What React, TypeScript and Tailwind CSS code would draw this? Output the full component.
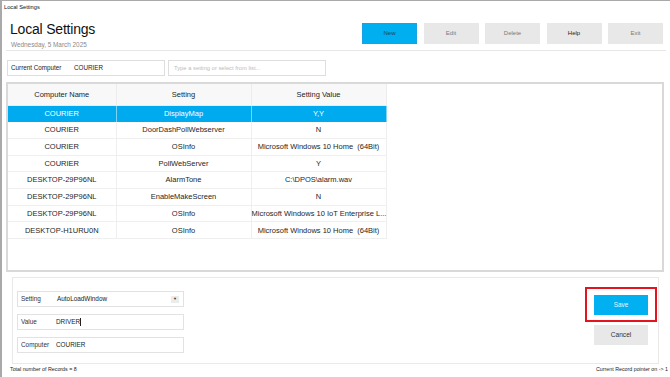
import React from "react";

type Row = { computer: string; setting: string; value: string };

const rows: Row[] = [
  { computer: "COURIER", setting: "DisplayMap", value: "Y,Y" },
  { computer: "COURIER", setting: "DoorDashPollWebserver", value: "N" },
  { computer: "COURIER", setting: "OSInfo", value: "Microsoft Windows 10 Home  (64Bit)" },
  { computer: "COURIER", setting: "PollWebServer", value: "Y" },
  { computer: "DESKTOP-29P96NL", setting: "AlarmTone", value: "C:\\DPOS\\alarm.wav" },
  { computer: "DESKTOP-29P96NL", setting: "EnableMakeScreen", value: "N" },
  { computer: "DESKTOP-29P96NL", setting: "OSInfo", value: "Microsoft Windows 10 IoT Enterprise L..." },
  { computer: "DESKTOP-H1URU0N", setting: "OSInfo", value: "Microsoft Windows 10 Home  (64Bit)" },
];

const ToolButton: React.FC<{ label: string; primary?: boolean; strong?: boolean }> = ({ label, primary, strong }) => (
  <button
    className={
      primary
        ? "w-[55px] h-[21px] bg-[#00aff0] border border-[#19a3e3] text-[6px] text-[#1f3f58]"
        : strong
        ? "w-[55px] h-[21px] bg-[#e8e8e8] text-[6px] text-[#222]"
        : "w-[55px] h-[21px] bg-[#e8e8e8] text-[6px] text-[#7a7a7a]"
    }
  >
    {label}
  </button>
);

export default function App() {
  return (
    <div className="w-[670px] h-[377px] bg-white border-l-2 border-t border-[#a9a9a9] flex flex-col overflow-hidden font-['Liberation_Sans',Arial,sans-serif]">
      {/* window title */}
      <div className="h-[13px] pl-[2px] flex items-center text-[5.7px] text-[#111]">Local Settings</div>

      {/* header */}
      <div className="mx-[4px] h-[37px] border-b border-[#e6e6e6] flex justify-between">
        <div className="pl-[4px] pt-[8px]">
          <div className="text-[14px] leading-[15px] text-[#111] tracking-[-0.2px]">Local Settings</div>
          <div className="mt-[4px] pl-[1px] text-[6.4px] leading-[7px] text-[#8a8a8a]">Wednesday, 5 March 2025</div>
        </div>
        <div className="flex gap-[6.5px] pt-[9px] pr-[3px]">
          <ToolButton label="New" primary />
          <ToolButton label="Edit" />
          <ToolButton label="Delete" />
          <ToolButton label="Help" strong />
          <ToolButton label="Exit" />
        </div>
      </div>

      {/* filter row */}
      <div className="flex gap-[3px] mt-[9px] pl-[5px]">
        <div className="w-[158px] h-[16px] border border-[#dedede] flex items-center text-[6.3px] text-[#222]">
          <span className="pl-[3px] w-[66px]">Current Computer</span>
          <span>COURIER</span>
        </div>
        <div className="w-[158px] h-[16px] border border-[#dedede] flex items-center pl-[5px] text-[5.8px] text-[#bdbdbd]">
          Type a setting or select from list...
        </div>
      </div>

      {/* grid panel */}
      <div className="mt-[6px] ml-[4px] w-[658px] h-[190px] border-2 border-[#d9d9d9]">
        <table className="w-[378px] border-collapse text-[7.5px] text-[#262626] table-fixed">
          <colgroup>
            <col className="w-[108px]" />
            <col className="w-[135px]" />
            <col className="w-[135px]" />
          </colgroup>
          <thead>
            <tr className="h-[21px] bg-[#f8f8f8]">
              <th className="font-normal border-r border-b border-[#ececec]">Computer Name</th>
              <th className="font-normal border-r border-b border-[#ececec]">Setting</th>
              <th className="font-normal border-r border-b border-[#ececec]">Setting Value</th>
            </tr>
          </thead>
          <tbody>
            {rows.map((r, i) => (
              <tr key={i} className={i === 0 ? "h-[16.7px] bg-[#00aaef] text-white" : "h-[16.7px]"}>
                <td className={i === 0 ? "text-center border-r border-[#7fd3f5]" : "text-center border-r border-b border-[#efefef]"}>{r.computer}</td>
                <td className={i === 0 ? "text-center border-r border-[#7fd3f5]" : "text-center border-r border-b border-[#efefef]"}>{r.setting}</td>
                <td className={i === 0 ? "text-center border-r border-[#7fd3f5] whitespace-pre" : "text-center border-r border-b border-[#efefef] whitespace-pre"}>{r.value}</td>
              </tr>
            ))}
          </tbody>
        </table>
      </div>

      {/* edit panel */}
      <div className="mt-[5px] ml-[10px] w-[647px] h-[87px] border border-[#e9e9e9] flex justify-between">
        <div className="pl-[4px] pt-[13px] flex flex-col gap-[7px] text-[6.4px] text-[#333]">
          <div className="w-[167px] h-[16px] border border-[#e2e2e2] flex items-center">
            <span className="pl-[3px] w-[39px]">Setting</span>
            <span className="flex-1 text-[#222]">AutoLoadWindow</span>
            <span className="w-[8px] h-[7px] mr-[4px] bg-[#ececec] flex items-center justify-center text-[4px] text-[#333]">▼</span>
          </div>
          <div className="w-[167px] h-[16px] border border-[#e2e2e2] flex items-center">
            <span className="pl-[3px] w-[38px]">Value</span>
            <span className="text-[#222]">DRIVER</span>
            <span className="w-[1px] h-[8px] bg-[#222]" />
          </div>
          <div className="w-[167px] h-[16px] border border-[#e2e2e2] flex items-center">
            <span className="pl-[3px] w-[38px]">Computer</span>
            <span className="text-[#222]">COURIER</span>
          </div>
        </div>
        <div className="pt-[9px] pr-[1px] flex flex-col items-center">
          <div className="w-[72px] h-[35px] border-2 border-[#e3141d] flex items-center justify-center">
            <button className="w-[54px] h-[20px] bg-[#00b0f0] text-[6.4px] text-[#e6f7ff]">Save</button>
          </div>
          <button className="mt-[3px] w-[54px] h-[20px] bg-[#e8e8e8] text-[6.6px] text-[#333]">Cancel</button>
        </div>
      </div>

      {/* status */}
      <div className="flex justify-between items-center h-[12px] pl-[8px] pr-[2px] text-[5.3px] text-[#222]">
        <span>Total number of Records = 8</span>
        <span>Current Record pointer on -&gt; 1</span>
      </div>
    </div>
  );
}
